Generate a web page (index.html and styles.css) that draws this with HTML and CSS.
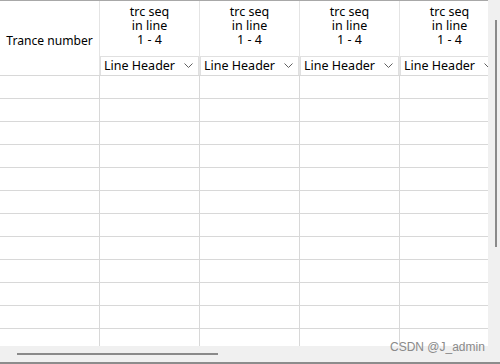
FILE: index.html
```html
<!DOCTYPE html>
<html>
<head>
<meta charset="utf-8">
<link rel="stylesheet" href="styles.css">
</head>
<body>
<div class="view">
  <div class="viewport">
    <div class="grid">
      <div class="row head">
        <div class="cell first"><span>Trance number</span></div>
        <div class="cell hcol">
          <div class="title"><div>trc seq</div><div>in line</div><div>1 - 4</div></div>
          <div class="combo"><span>Line Header</span><svg class="chev" width="9" height="5" viewBox="0 0 9 5"><path d="M0.5 0.5 L4.5 4.5 L8.5 0.5" fill="none" stroke="#606060" stroke-width="1"/></svg></div>
        </div>
        <div class="cell hcol">
          <div class="title"><div>trc seq</div><div>in line</div><div>1 - 4</div></div>
          <div class="combo"><span>Line Header</span><svg class="chev" width="9" height="5" viewBox="0 0 9 5"><path d="M0.5 0.5 L4.5 4.5 L8.5 0.5" fill="none" stroke="#606060" stroke-width="1"/></svg></div>
        </div>
        <div class="cell hcol">
          <div class="title"><div>trc seq</div><div>in line</div><div>1 - 4</div></div>
          <div class="combo"><span>Line Header</span><svg class="chev" width="9" height="5" viewBox="0 0 9 5"><path d="M0.5 0.5 L4.5 4.5 L8.5 0.5" fill="none" stroke="#606060" stroke-width="1"/></svg></div>
        </div>
        <div class="cell hcol">
          <div class="title"><div>trc seq</div><div>in line</div><div>1 - 4</div></div>
          <div class="combo"><span>Line Header</span><svg class="chev" width="9" height="5" viewBox="0 0 9 5"><path d="M0.5 0.5 L4.5 4.5 L8.5 0.5" fill="none" stroke="#606060" stroke-width="1"/></svg></div>
        </div>
      </div>
      <div class="row"><div class="cell"></div><div class="cell"></div><div class="cell"></div><div class="cell"></div><div class="cell"></div></div>
      <div class="row"><div class="cell"></div><div class="cell"></div><div class="cell"></div><div class="cell"></div><div class="cell"></div></div>
      <div class="row"><div class="cell"></div><div class="cell"></div><div class="cell"></div><div class="cell"></div><div class="cell"></div></div>
      <div class="row"><div class="cell"></div><div class="cell"></div><div class="cell"></div><div class="cell"></div><div class="cell"></div></div>
      <div class="row"><div class="cell"></div><div class="cell"></div><div class="cell"></div><div class="cell"></div><div class="cell"></div></div>
      <div class="row"><div class="cell"></div><div class="cell"></div><div class="cell"></div><div class="cell"></div><div class="cell"></div></div>
      <div class="row"><div class="cell"></div><div class="cell"></div><div class="cell"></div><div class="cell"></div><div class="cell"></div></div>
      <div class="row"><div class="cell"></div><div class="cell"></div><div class="cell"></div><div class="cell"></div><div class="cell"></div></div>
      <div class="row"><div class="cell"></div><div class="cell"></div><div class="cell"></div><div class="cell"></div><div class="cell"></div></div>
      <div class="row"><div class="cell"></div><div class="cell"></div><div class="cell"></div><div class="cell"></div><div class="cell"></div></div>
      <div class="row"><div class="cell"></div><div class="cell"></div><div class="cell"></div><div class="cell"></div><div class="cell"></div></div>
      <div class="row"><div class="cell"></div><div class="cell"></div><div class="cell"></div><div class="cell"></div><div class="cell"></div></div>
    </div>
    <div class="vscroll"><div class="vthumb"></div></div>
  </div>
  <div class="hscroll"><div class="hthumb"></div></div>
  <div class="watermark">CSDN @J_admin</div>
</div>
</body>
</html>
```

FILE: styles.css
```css
html, body {
  margin: 0;
  padding: 0;
  background: #ffffff;
}
.view {
  position: relative;
  width: 500px;
  height: 364px;
  overflow: hidden;
  font-family: "Noto Sans", "Liberation Sans", sans-serif;
  font-size: 12.5px;
  color: #000;
  border-bottom: 2px solid #8c8c8c;
  box-sizing: border-box;
}
.viewport {
  display: flex;
  height: 346px;
}
.grid {
  width: 488px;
  height: 346px;
  overflow: hidden;
  border-top: 1px solid #a8a8a8;
  box-sizing: border-box;
  flex: none;
}
.row {
  display: flex;
  height: 23px;
  border-bottom: 1px solid #d8d8d8;
  box-sizing: border-box;
}
.row.head {
  height: 75px;
  border-bottom: 1px solid #d8d8d8;
}
.cell {
  flex: none;
  width: 100px;
  border-right: 1px solid #d8d8d8;
  box-sizing: border-box;
}
.head .cell {
  border-right: 1px solid #e4e4e4;
}
.cell.first {
  display: flex;
  align-items: center;
  justify-content: center;
  padding-top: 5px;
  white-space: nowrap;
  font-size: 12.1px;
}
.hcol {
  display: flex;
  flex-direction: column;
  justify-content: space-between;
  align-items: stretch;
  padding-top: 4px;
}
.title {
  text-align: center;
  line-height: 14px;
}
.combo {
  display: flex;
  align-items: center;
  justify-content: space-between;
  height: 19px;
  padding: 0 5px 1px 3px;
  border: 1px solid #e0e0e0;
  border-bottom: none;
  background: #fff;
  box-sizing: border-box;
  white-space: nowrap;
  line-height: 16px;
}
.chev {
  flex: none;
}
.vscroll {
  flex: none;
  width: 12px;
  height: 346px;
  background: #f0f0f0;
}
.vthumb {
  margin: 20px 0 0 7px;
  width: 2px;
  height: 227px;
  background: #8a8a8a;
}
.hscroll {
  height: 16px;
  background: #f0f0f0;
  display: flex;
  align-items: center;
}
.hthumb {
  margin-left: 17px;
  width: 201px;
  height: 2px;
  background: #8a8a8a;
}
.watermark {
  position: absolute;
  left: 390px;
  top: 340px;
  font-size: 12px;
  color: #8a8a8a;
  font-family: "Liberation Sans", sans-serif;
}
```
